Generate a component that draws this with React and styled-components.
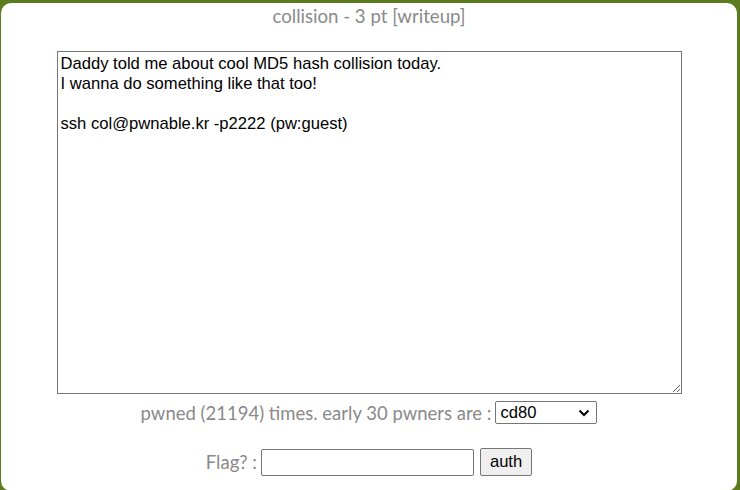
import React from "react";
import styled, { createGlobalStyle } from "styled-components";

const Global = createGlobalStyle`
  html, body { margin: 0; padding: 0; background: #5b7b1e; overflow: hidden; }
  body { font-family: Lato, "Open Sans", sans-serif; }
`;

const Panel = styled.div`
  margin: 3px 3px 0 1px;
  height: 488px;
  background: #ffffff;
  border-radius: 10px;
  display: flex;
  flex-direction: column;
  align-items: center;
  box-sizing: border-box;
`;

const Title = styled.div`
  margin-top: 2px;
  font-size: 18.6px;
  line-height: 22px;
  color: #8a8a8a;
  height: 46px;
`;

const Desc = styled.textarea`
  width: 625px;
  height: 343px;
  box-sizing: border-box;
  border: 1px solid #767676;
  border-radius: 0;
  padding: 2px 3px;
  font-family: "Liberation Sans", Arial, sans-serif;
  font-size: 16.6px;
  line-height: 20px;
  color: #000;
  resize: both;
  outline: none;
`;

const Row = styled.div`
  display: flex;
  align-items: center;
  gap: ${(p) => p.$gap || 4}px;
  margin-top: ${(p) => p.$top}px;
  font-size: 18.5px;
  color: #8a8a8a;
`;

const chevron =
  "url(\"data:image/svg+xml;utf8,<svg xmlns='http://www.w3.org/2000/svg' width='12' height='8' viewBox='0 0 12 8'><path d='M1.5 1.5 L6 6 L10.5 1.5' fill='none' stroke='black' stroke-width='2'/></svg>\")";

const Select = styled.select`
  appearance: none;
  -webkit-appearance: none;
  width: 102px;
  height: 23px;
  font-family: "Liberation Sans", Arial, sans-serif;
  font-size: 16.6px;
  border: 1px solid #767676;
  border-radius: 2px;
  background: #fff ${chevron} no-repeat right 6px center;
  color: #000;
  padding: 0 4px;
`;

const Input = styled.input`
  width: 213px;
  height: 27px;
  box-sizing: border-box;
  border: 1px solid #767676;
  border-radius: 2px;
  font-size: 16px;
`;

const Button = styled.button`
  height: 28px;
  padding: 0 9px;
  font-family: "Liberation Sans", Arial, sans-serif;
  font-size: 16.6px;
  color: #000;
  background: #efefef;
  border: 1px solid #767676;
  border-radius: 2px;
  margin-left: 2px;
`;

const text = `Daddy told me about cool MD5 hash collision today.
I wanna do something like that too!

ssh col@pwnable.kr -p2222 (pw:guest)`;

export default function App() {
  return (
    <>
      <Global />
      <Panel>
        <Title>collision - 3 pt [writeup]</Title>
        <Desc readOnly defaultValue={text} />
        <Row $top={7}>
          <span>pwned (21194) times. early 30 pwners are :</span>
          <Select defaultValue="cd80">
            <option>cd80</option>
          </Select>
        </Row>
        <Row $top={24}>
          <span>Flag? :</span>
          <Input type="text" />
          <Button>auth</Button>
        </Row>
      </Panel>
    </>
  );
}
